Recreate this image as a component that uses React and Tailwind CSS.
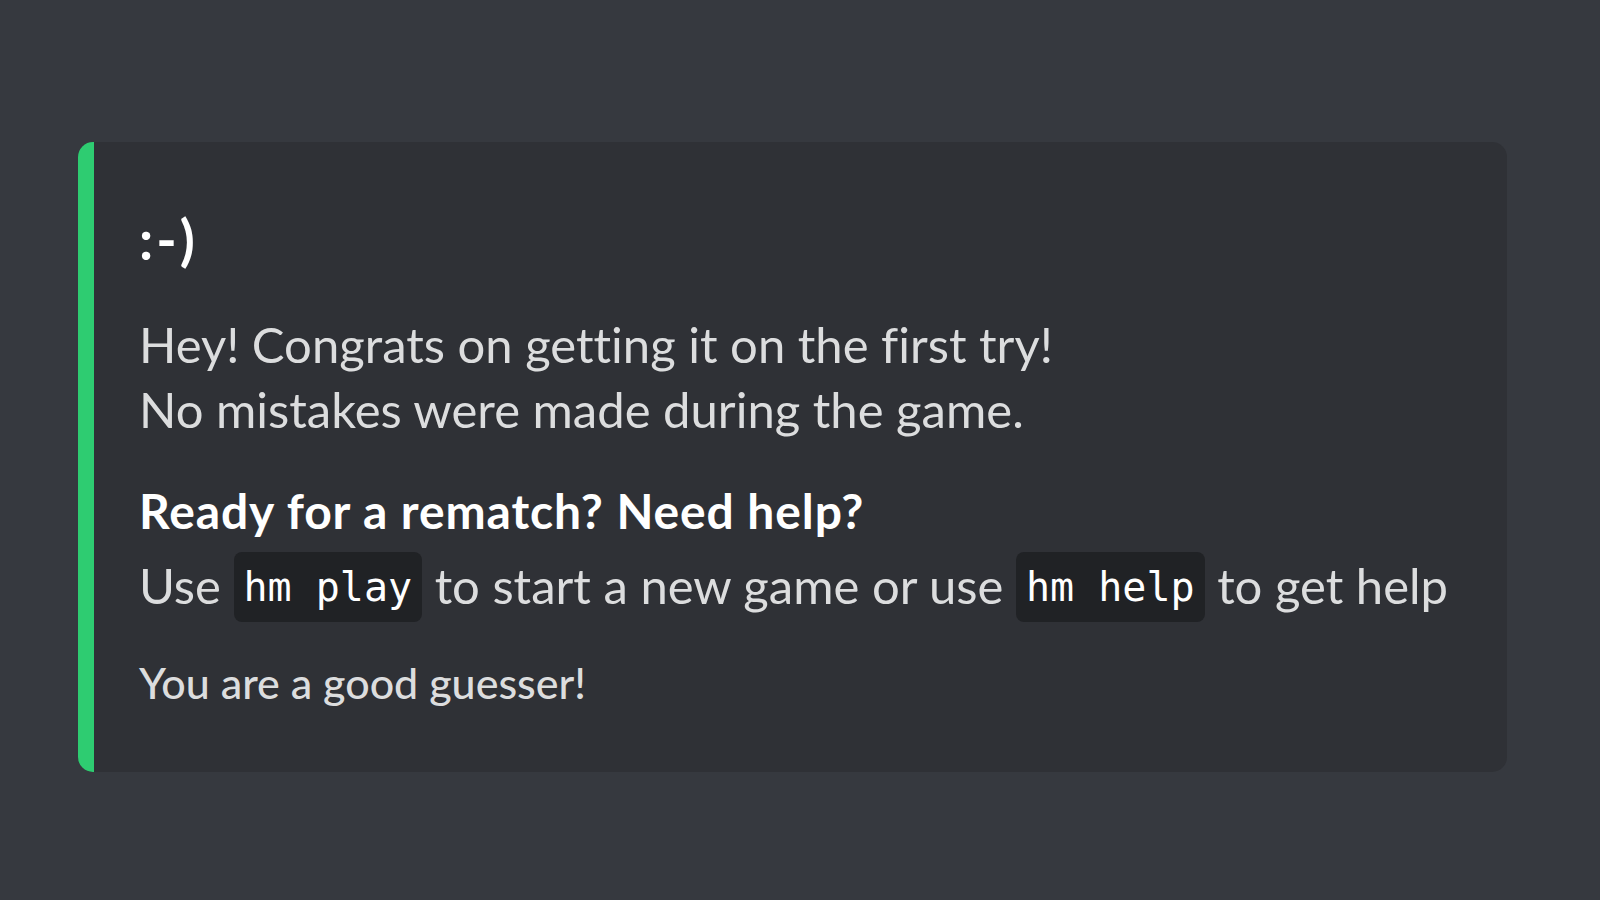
export default function App() {
  const code =
    "bg-[#202225] rounded-[8px] px-[10px] py-[12px] text-[40px] text-white align-[3px] tracking-normal";
  const mono = { fontFamily: "'DejaVu Sans Mono', monospace" };
  return (
    <div
      className="w-[1600px] h-[900px] bg-[#36393f] pt-[142px] pl-[78px] [font-variant-ligatures:none]"
      style={{ fontFamily: "Lato, 'Noto Sans', sans-serif" }}
    >
      <div className="flex w-[1429px] h-[630px] rounded-[15px] overflow-hidden bg-[#2f3136]">
        <div className="w-[16px] bg-[#2ecc71] shrink-0" />
        <div className="flex flex-col pl-[45px] pt-[67px] text-[#dcddde]">
          <div className="text-[55px] leading-[60px] font-bold text-white tracking-[3px]">:-)</div>
          <div className="mt-[43px] text-[49px] leading-[65px]">
            <div>Hey! Congrats on getting it on the first try!</div>
            <div>No mistakes were made during the game.</div>
          </div>
          <div className="mt-[42px] text-[48px] leading-[53px] font-bold text-white tracking-[0.9px]">
            Ready for a rematch? Need help?
          </div>
          <div className="mt-[14px] text-[49px] leading-[68px] whitespace-nowrap">
            Use{" "}
            <code className={code} style={mono}>
              hm play
            </code>{" "}
            to start a new game or use{" "}
            <code className={code} style={mono}>
              hm help
            </code>{" "}
            to get help
          </div>
          <div className="mt-[36px] text-[43px] leading-[52px] font-medium">
            You are a good guesser!
          </div>
        </div>
      </div>
    </div>
  );
}
